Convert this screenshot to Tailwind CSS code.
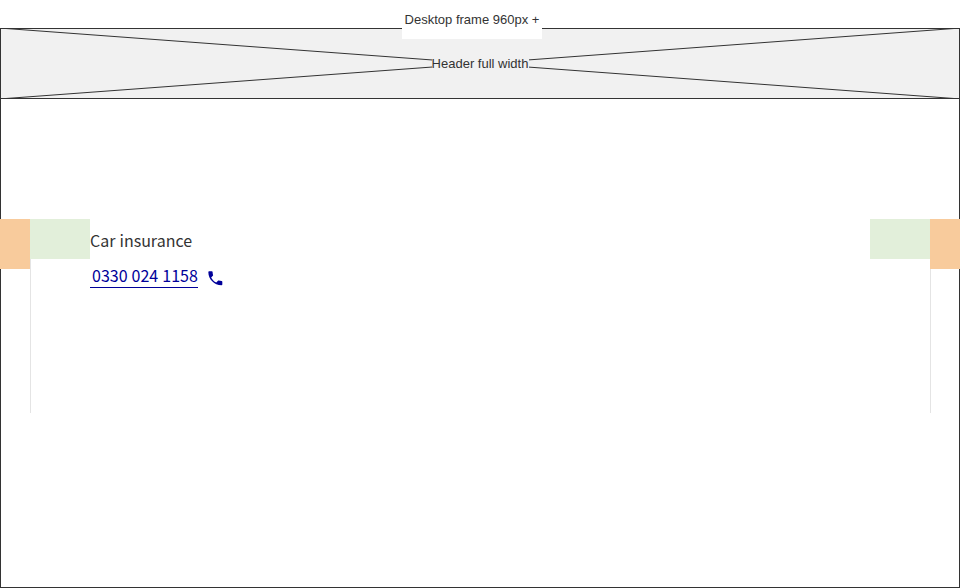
<!DOCTYPE html>
<html lang="en"><head><meta charset="utf-8"><title>Desktop frame</title><script src="https://cdn.jsdelivr.net/npm/@tailwindcss/browser@4"></script></head>
<body class="w-[960px] h-[588px] overflow-hidden bg-white text-[#333] font-['Liberation_Sans',Arial,sans-serif]">
<div class="relative flex h-full flex-col pt-7">
<div class="absolute top-0 left-[402px] z-10 h-[39px] w-[140px] bg-white pt-3 text-center text-[13px] leading-[15px] whitespace-nowrap">Desktop frame 960px +</div>
<main class="flex grow flex-col border border-[#333]">
<header class="relative -mx-px -mt-px flex h-[71px] shrink-0 items-center justify-center border border-[#333] bg-[#f1f1f1]">
<svg class="absolute -inset-px h-[71px] w-[960px]" viewBox="0 0 960 71" fill="none" stroke="#333"><path d="M6 .5 954 70.5M6 70.5 954 .5"/></svg>
<span class="relative -mr-px bg-[#f1f1f1] pr-px text-[13px] leading-[15px]">Header full width</span>
</header>
<section class="-mx-px mt-[120px] flex h-[194px]">
<div class="h-[50px] w-[30px] shrink-0 bg-[#f8cb9c]"></div>
<div class="flex w-[901px] shrink-0 -mr-px border-x border-[#e4e4e4]">
<div class="-ml-px h-10 w-[60px] shrink-0 bg-[#e2efda]"></div>
<div class="grow pt-[9px] font-['Noto_Sans_CJK_SC','Noto_Sans',sans-serif]">
<h1 class="text-[16px] leading-6 [word-spacing:.5px]">Car insurance</h1>
<div class="mt-3 flex"><a class="h-6 w-[108px] border-b border-[#000099] pl-0.5 text-[16px] leading-[22px] whitespace-nowrap text-[#000099] [word-spacing:.5px]">0330 024 1158</a><svg class="mt-[5px] ml-2 size-[18.67px]" viewBox="0 0 24 24" fill="#000099"><path d="M6.62 10.79c1.44 2.83 3.76 5.14 6.59 6.59l2.2-2.2c.27-.27.67-.36 1.02-.24 1.12.37 2.33.57 3.57.57.55 0 1 .45 1 1V20c0 .55-.45 1-1 1-9.39 0-17-7.61-17-17 0-.55.45-1 1-1h3.5c.55 0 1 .45 1 1 0 1.25.2 2.45.57 3.57.11.35.03.74-.25 1.02l-2.2 2.2z"/></svg></div>
</div>
<div class="h-10 w-[60px] shrink-0 bg-[#e2efda]"></div>
</div>
<div class="h-[50px] w-[30px] shrink-0 bg-[#f8cb9c]"></div>
</section>
</main>
</div>
</body></html>
